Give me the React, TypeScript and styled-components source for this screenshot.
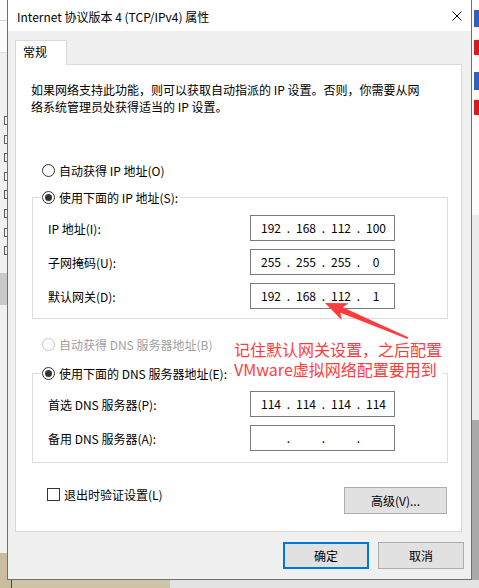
import React from "react";
import styled, { createGlobalStyle } from "styled-components";

const FONT = `"Noto Sans CJK SC", "Noto Sans", sans-serif`;

const GlobalStyle = createGlobalStyle`
  html, body { margin: 0; padding: 0; background: #f0f0f0; }
  body { width: 479px; height: 588px; overflow: hidden; }
  * { box-sizing: border-box; }
`;

const Desktop = styled.div`
  position: relative;
  width: 479px;
  height: 588px;
  display: flex;
  flex-direction: column;
  overflow: hidden;
  font-family: ${FONT};
  font-size: 12px;
  color: #000;
`;

const TopRow = styled.div`
  display: flex;
  height: 580px;
`;

const Strip = styled.div<{ $bg: string }>`
  width: 7px;
  flex: none;
  display: flex;
  flex-direction: column;
  background: ${(p) => p.$bg};
`;

const Band = styled.div<{ $h: number; $bg: string; $w?: number }>`
  height: ${(p) => p.$h}px;
  ${(p) => (p.$w ? `width: ${p.$w}px;` : "")}
  flex: none;
  background: ${(p) => p.$bg};
`;

const StripChecks = styled.div`
  height: 142px;
  flex: none;
  display: flex;
  flex-direction: column;
  gap: 9.6px;
  padding-left: 4px;
  background: #f0f0f0;
`;

const StripCheck = styled.div`
  width: 3px;
  height: 9px;
  border: 1px solid #5c5c5c;
  border-right: none;
`;

const StripIcons = styled.div`
  height: 215px;
  flex: none;
  display: flex;
  flex-direction: column;
  padding-left: 2px;
  background: #fcfcfc;
`;

const StripMark = styled.div<{ $mt: number; $h: number; $color: string }>`
  margin-top: ${(p) => p.$mt}px;
  width: 5px;
  height: ${(p) => p.$h}px;
  background: ${(p) => p.$color};
`;

const BottomStrip = styled.div`
  height: 8px;
  display: flex;
`;

const Dialog = styled.div`
  width: 465px;
  height: 580px;
  flex: none;
  border: 1px solid #6f6f6f;
  border-top: none;
  background: #f0f0f0;
  display: flex;
  flex-direction: column;
`;

const TitleBar = styled.div`
  height: 31px;
  flex: none;
  background: #fff;
  display: flex;
  align-items: center;
  justify-content: space-between;
  padding: 0 9px;
`;

const Title = styled.div`
  font-size: 12px;
  line-height: 16px;
  padding-top: 2px;
`;

const Body = styled.div`
  flex: 1;
  display: flex;
  flex-direction: column;
  padding: 9px 7px 0 7px;
`;

const TabStrip = styled.div`
  height: 24px;
  display: flex;
`;

const Tab = styled.div`
  position: relative;
  z-index: 1;
  width: 52px;
  height: 25px;
  background: #fff;
  border: 1px solid #d9d9d9;
  border-bottom: none;
  padding-left: 7px;
  line-height: 22px;
`;

const Panel = styled.div`
  width: 447px;
  height: 468px;
  background: #fff;
  border: 1px solid #d9d9d9;
  display: flex;
  flex-direction: column;
  padding-left: 15px;
`;

const Intro = styled.p`
  margin: 16px 0 0 0;
  line-height: 17px;
`;

const RadioRow = styled.label<{ $mt?: number; $disabled?: boolean }>`
  display: flex;
  align-items: center;
  gap: 4px;
  height: 17px;
  line-height: 17px;
  margin-top: ${(p) => p.$mt ?? 0}px;
  margin-left: ${(p) => (p.$mt !== undefined ? 11 : 0)}px;
  color: ${(p) => (p.$disabled ? "#a0a0a0" : "#000")};
  white-space: nowrap;
`;

const RadioCircle = styled.span<{ $checked?: boolean; $disabled?: boolean }>`
  width: 13px;
  height: 13px;
  flex: none;
  border-radius: 50%;
  border: 1px solid ${(p) => (p.$disabled ? "#c4c4c4" : "#333")};
  background: #fff;
  display: inline-flex;
  align-items: center;
  justify-content: center;
  &::after {
    content: "";
    width: 7px;
    height: 7px;
    border-radius: 50%;
    background: #333;
    display: ${(p) => (p.$checked ? "block" : "none")};
  }
`;

const Group = styled.fieldset<{ $mt: number; $pb: number }>`
  margin: ${(p) => p.$mt}px 0 0 1px;
  width: 416px;
  min-width: 0;
  border: 1px solid #dcdcdc;
  padding: 9px 0 ${(p) => p.$pb}px 8px;
`;

const GroupLegend = styled.legend`
  padding: 0 2px 0 1px;
  margin: 0;
`;

const FieldGrid = styled.div`
  display: grid;
  grid-template-columns: 202px 145px;
  grid-auto-rows: 26px;
  row-gap: 8px;
  align-items: center;
  margin-left: 7px;
`;

const FieldLabel = styled.span`
  line-height: 17px;
  white-space: nowrap;
`;

const IpBox = styled.div`
  width: 145px;
  height: 26px;
  border: 1px solid #7a7a7a;
  background: #fff;
  display: flex;
  align-items: center;
  padding: 0 0 1px 5px;
`;

const Octet = styled.span`
  width: 30px;
  flex: none;
  text-align: center;
  line-height: 17px;
`;

const Dot = styled.span`
  width: 5px;
  flex: none;
  text-align: center;
  line-height: 17px;
`;

const BottomRow = styled.div`
  margin: 24px 0 0 1px;
  width: 416px;
  display: flex;
  justify-content: space-between;
  align-items: flex-start;
`;

const CheckRow = styled.label`
  display: flex;
  align-items: center;
  gap: 4px;
  margin: 1px 0 0 15px;
  height: 13px;
  line-height: 17px;
`;

const CheckBox = styled.span`
  width: 13px;
  height: 13px;
  flex: none;
  border: 1px solid #333;
  background: #fff;
`;

const Button = styled.button<{ $w: number; $h: number; $primary?: boolean }>`
  width: ${(p) => p.$w}px;
  height: ${(p) => p.$h}px;
  flex: none;
  margin: 0;
  padding: 0;
  background: #e1e1e1;
  border: ${(p) => (p.$primary ? "2px solid #0078d7" : "1px solid #adadad")};
  font-family: ${FONT};
  font-size: 12px;
  line-height: 16px;
  color: #000;
`;

const AdvancedButton = styled(Button)`
  margin-right: 1px;
`;

const ButtonRow = styled.div`
  margin-top: 10px;
  display: flex;
  justify-content: flex-end;
  gap: 9px;
`;

const Annotation = styled.div`
  position: absolute;
  left: 232px;
  top: 339px;
  padding: 0 1px 0 2px;
  background: #fff;
  color: #ff3b3b;
  font-family: ${FONT};
  font-size: 16px;
  line-height: 20px;
  white-space: nowrap;
`;

const ArrowLayer = styled.svg`
  position: absolute;
  left: 0;
  top: 0;
  pointer-events: none;
`;

function Radio({ label, checked, disabled, mt }: { label: string; checked?: boolean; disabled?: boolean; mt?: number }) {
  return (
    <RadioRow $mt={mt} $disabled={disabled}>
      <RadioCircle $checked={checked} $disabled={disabled} />
      {label}
    </RadioRow>
  );
}

function IpField({ value }: { value: string[] }) {
  return (
    <IpBox>
      {value.map((v, i) => (
        <React.Fragment key={i}>
          <Octet>{v}</Octet>
          {i < 3 && <Dot>.</Dot>}
        </React.Fragment>
      ))}
    </IpBox>
  );
}

export default function App() {
  return (
    <>
      <GlobalStyle />
      <Desktop>
        <TopRow>
          <Strip $bg="#f0f0f0">
            <Band $h={20} $bg="#fbfbfb" />
            <Band $h={1} $bg="#d5d5d5" />
            <Band $h={31} $bg="#fbfbfb" />
            <Band $h={1} $bg="#dcdcdc" />
            <Band $h={63} $bg="#f0f0f0" />
            <StripChecks>
              {Array.from({ length: 8 }).map((_, i) => (
                <StripCheck key={i} />
              ))}
            </StripChecks>
            <Band $h={15} $bg="#f0f0f0" />
            <Band $h={32} $bg="#c9c9c9" />
            <Band $h={248} $bg="#f0f0f0" />
            <Band $h={27} $bg="#c8bd9f" />
          </Strip>

          <Dialog>
            <TitleBar>
              <Title>Internet 协议版本 4 (TCP/IPv4) 属性</Title>
              <svg width="10" height="10" viewBox="0 0 10 10">
                <path d="M0.5 0.5 L9.5 9.5 M9.5 0.5 L0.5 9.5" stroke="#000" strokeWidth="1" fill="none" />
              </svg>
            </TitleBar>
            <Body>
              <TabStrip>
                <Tab>常规</Tab>
              </TabStrip>
              <Panel>
                <Intro>
                  如果网络支持此功能，则可以获取自动指派的 IP 设置。否则，你需要从网
                  <br />
                  络系统管理员处获得适当的 IP 设置。
                </Intro>
                <Radio mt={47} label="自动获得 IP 地址(O)" />
                <Group $mt={10} $pb={9}>
                  <GroupLegend>
                    <Radio checked label="使用下面的 IP 地址(S):" />
                  </GroupLegend>
                  <FieldGrid>
                    <FieldLabel>IP 地址(I):</FieldLabel>
                    <IpField value={["192", "168", "112", "100"]} />
                    <FieldLabel>子网掩码(U):</FieldLabel>
                    <IpField value={["255", "255", "255", "0"]} />
                    <FieldLabel>默认网关(D):</FieldLabel>
                    <IpField value={["192", "168", "112", "1"]} />
                  </FieldGrid>
                </Group>
                <Radio mt={17} disabled label="自动获得 DNS 服务器地址(B)" />
                <Group $mt={12} $pb={11}>
                  <GroupLegend>
                    <Radio checked label="使用下面的 DNS 服务器地址(E):" />
                  </GroupLegend>
                  <FieldGrid>
                    <FieldLabel>首选 DNS 服务器(P):</FieldLabel>
                    <IpField value={["114", "114", "114", "114"]} />
                    <FieldLabel>备用 DNS 服务器(A):</FieldLabel>
                    <IpField value={["", "", "", ""]} />
                  </FieldGrid>
                </Group>
                <BottomRow>
                  <CheckRow>
                    <CheckBox />
                    退出时验证设置(L)
                  </CheckRow>
                  <AdvancedButton $w={103} $h={27}>高级(V)...</AdvancedButton>
                </BottomRow>
              </Panel>
              <ButtonRow>
                <Button $w={86} $h={27} $primary>确定</Button>
                <Button $w={86} $h={27}>取消</Button>
              </ButtonRow>
            </Body>
          </Dialog>

          <Strip $bg="#ebebeb">
            <StripIcons>
              <StripMark $mt={10} $h={17} $color="#2f5fc0" />
              <StripMark $mt={13} $h={15} $color="#d41c1c" />
              <StripMark $mt={17} $h={18} $color="#2f5fc0" />
              <StripMark $mt={10} $h={15} $color="#d41c1c" />
            </StripIcons>
            <Band $h={205} $bg="#ebebeb" />
            <Band $h={160} $bg="#a9a9a9" />
          </Strip>
        </TopRow>
        <BottomStrip>
          <Band $h={8} $w={11} $bg="#c8bd9f" />
          <Band $h={8} $w={1} $bg="#4a4a4a" />
          <Band $h={8} $w={158} $bg="#cdc3a8" />
          <Band $h={8} $w={309} $bg="#e3e3e3" />
        </BottomStrip>

        <Annotation>
          记住默认网关设置，之后配置
          <br />
          VMware虚拟网络配置要用到
        </Annotation>
        <ArrowLayer width="479" height="588" viewBox="0 0 479 588">
          <polygon
            points="325,303 348.7,303.3 342.7,307.3 408.2,337.2 407.4,339 340.4,312.8 341.7,319.9"
            fill="#ff3b3b"
          />
        </ArrowLayer>
      </Desktop>
    </>
  );
}
